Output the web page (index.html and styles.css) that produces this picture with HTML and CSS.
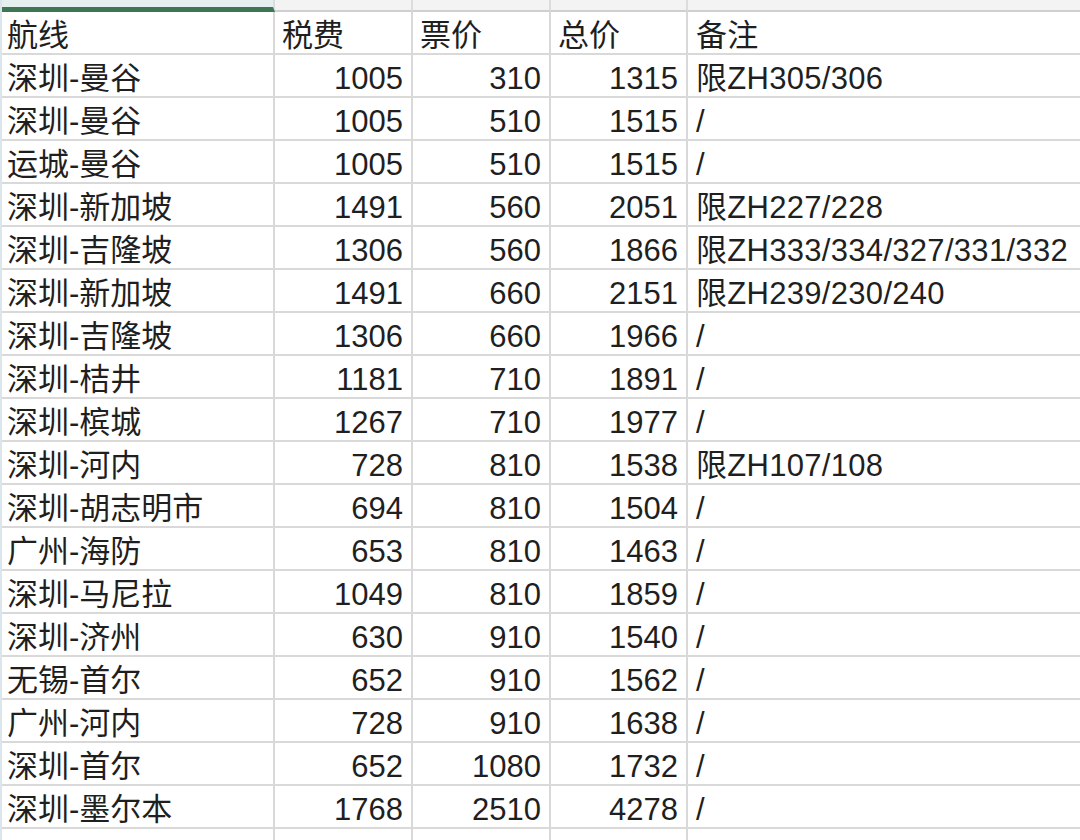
FILE: index.html
```html
<!DOCTYPE html>
<html lang="zh-CN">
<head>
<meta charset="utf-8">
<title>航线票价</title>
<link rel="stylesheet" href="styles.css">
</head>
<body>
<div class="sheet">
  <div class="row colhead">
    <div class="ch ch-sel"></div><div class="ch"></div><div class="ch"></div><div class="ch"></div><div class="ch ch-last"></div>
  </div>
  <div class="row"><div class="c">航线</div><div class="c">税费</div><div class="c">票价</div><div class="c">总价</div><div class="c">备注</div></div>
  <div class="row"><div class="c">深圳-曼谷</div><div class="c n">1005</div><div class="c n">310</div><div class="c n">1315</div><div class="c">限ZH305/306</div></div>
  <div class="row"><div class="c">深圳-曼谷</div><div class="c n">1005</div><div class="c n">510</div><div class="c n">1515</div><div class="c">/</div></div>
  <div class="row"><div class="c">运城-曼谷</div><div class="c n">1005</div><div class="c n">510</div><div class="c n">1515</div><div class="c">/</div></div>
  <div class="row"><div class="c">深圳-新加坡</div><div class="c n">1491</div><div class="c n">560</div><div class="c n">2051</div><div class="c">限ZH227/228</div></div>
  <div class="row"><div class="c">深圳-吉隆坡</div><div class="c n">1306</div><div class="c n">560</div><div class="c n">1866</div><div class="c">限ZH333/334/327/331/332</div></div>
  <div class="row"><div class="c">深圳-新加坡</div><div class="c n">1491</div><div class="c n">660</div><div class="c n">2151</div><div class="c">限ZH239/230/240</div></div>
  <div class="row"><div class="c">深圳-吉隆坡</div><div class="c n">1306</div><div class="c n">660</div><div class="c n">1966</div><div class="c">/</div></div>
  <div class="row"><div class="c">深圳-桔井</div><div class="c n">1181</div><div class="c n">710</div><div class="c n">1891</div><div class="c">/</div></div>
  <div class="row"><div class="c">深圳-槟城</div><div class="c n">1267</div><div class="c n">710</div><div class="c n">1977</div><div class="c">/</div></div>
  <div class="row"><div class="c">深圳-河内</div><div class="c n">728</div><div class="c n">810</div><div class="c n">1538</div><div class="c">限ZH107/108</div></div>
  <div class="row"><div class="c">深圳-胡志明市</div><div class="c n">694</div><div class="c n">810</div><div class="c n">1504</div><div class="c">/</div></div>
  <div class="row"><div class="c">广州-海防</div><div class="c n">653</div><div class="c n">810</div><div class="c n">1463</div><div class="c">/</div></div>
  <div class="row"><div class="c">深圳-马尼拉</div><div class="c n">1049</div><div class="c n">810</div><div class="c n">1859</div><div class="c">/</div></div>
  <div class="row"><div class="c">深圳-济州</div><div class="c n">630</div><div class="c n">910</div><div class="c n">1540</div><div class="c">/</div></div>
  <div class="row"><div class="c">无锡-首尔</div><div class="c n">652</div><div class="c n">910</div><div class="c n">1562</div><div class="c">/</div></div>
  <div class="row"><div class="c">广州-河内</div><div class="c n">728</div><div class="c n">910</div><div class="c n">1638</div><div class="c">/</div></div>
  <div class="row"><div class="c">深圳-首尔</div><div class="c n">652</div><div class="c n">1080</div><div class="c n">1732</div><div class="c">/</div></div>
  <div class="row"><div class="c">深圳-墨尔本</div><div class="c n">1768</div><div class="c n">2510</div><div class="c n">4278</div><div class="c">/</div></div>
  <div class="row"><div class="c"></div><div class="c"></div><div class="c"></div><div class="c"></div><div class="c"></div></div>
</div>
</body>
</html>
```

FILE: styles.css
```css
html, body {
  margin: 0;
  padding: 0;
  background: #ffffff;
}
body {
  width: 1080px;
  height: 840px;
  overflow: hidden;
  font-family: "Liberation Sans", "Noto Sans CJK SC", sans-serif;
  color: #1f1f1f;
}
.sheet {
  width: 1080px;
  border-left: 2px solid #dbe6ec;
  box-sizing: border-box;
}
.row {
  display: grid;
  grid-template-columns: 273px 138px 138px 137px 1fr;
}
.colhead .ch {
  height: 12px;
  box-sizing: border-box;
  background: #f3f3f3;
  border-right: 2px solid #dcdcdc;
  border-bottom: 2px solid #cfcfcf;
}
.colhead .ch-sel {
  background: #e6eff0;
  border-bottom: 5px solid #3e7552;
}
.colhead .ch-last {
  border-right: none;
}
.c {
  height: 43px;
  box-sizing: border-box;
  padding: 6px 8px 0 7px;
  line-height: 35px;
  font-size: 31px;
  white-space: nowrap;
  overflow: hidden;
  border-right: 2px solid #d9d9d9;
  border-bottom: 2px solid #d9d9d9;
}
.c:first-child {
  padding-left: 5px;
}
.c:last-child {
  border-right: none;
  padding-left: 8px;
  letter-spacing: 0.3px;
}
.n {
  text-align: right;
}
```
